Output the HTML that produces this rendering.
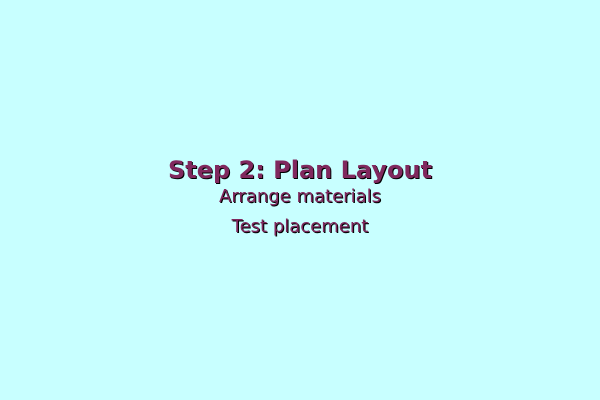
<!DOCTYPE html>
<html><head><style>
html,body{margin:0;padding:0}
body{width:600px;height:400px;background:#c8ffff;position:relative;overflow:hidden;font-family:"DejaVu Sans",sans-serif;color:#80285e}
div{position:absolute;left:0;width:600px;text-align:center;text-shadow:1px 1px 0 #000;white-space:nowrap}
.t{top:155px;font-size:24px;font-weight:bold;line-height:30px}
.s1{top:186px;font-size:18px;line-height:22px}
.s2{top:216px;font-size:18px;line-height:22px}
</style></head><body>
<div class="t">Step 2: Plan Layout</div>
<div class="s1">Arrange materials</div>
<div class="s2">Test placement</div>
</body></html>
